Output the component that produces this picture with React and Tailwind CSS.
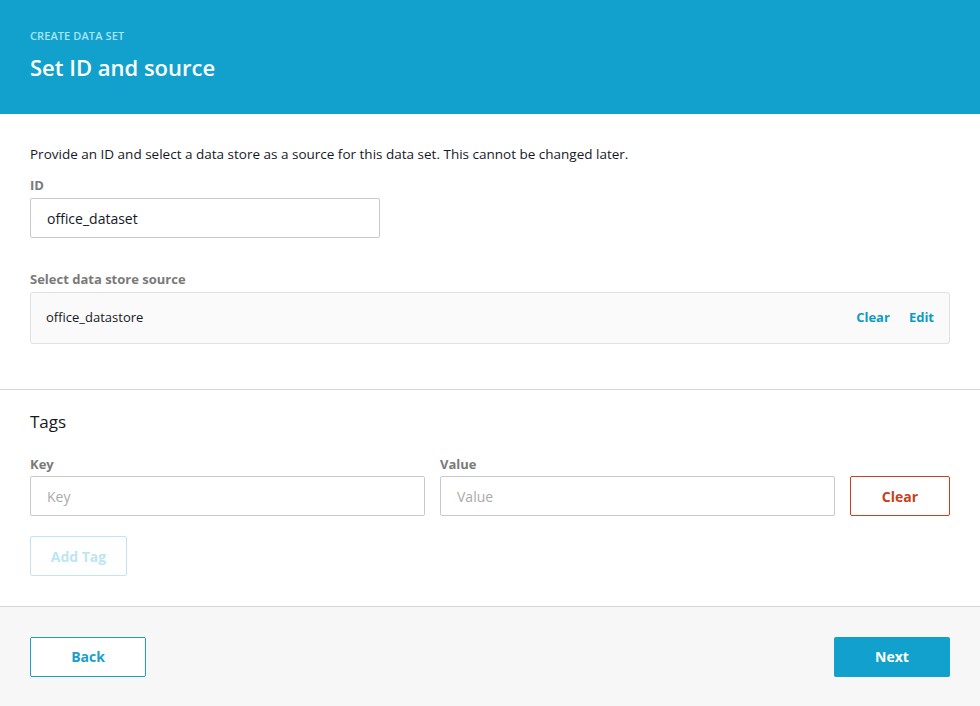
import React from 'react'

const font = { fontFamily: '"Open Sans", "Noto Sans", sans-serif' }

export default function App() {
  return (
    <div className="w-[980px] h-[706px] bg-white flex flex-col text-[#16191f]" style={font}>
      {/* Header */}
      <div className="h-[114px] bg-[#11a1cc] px-[30px] pt-[29px]">
        <div className="text-[11px] font-semibold text-[#a6e6f8] leading-[14px] tracking-[0.1px]">CREATE DATA SET</div>
        <div className="mt-[10px] text-[22px] font-semibold text-white leading-[28px]">Set ID and source</div>
      </div>

      {/* ID and source */}
      <div className="px-[30px] pt-[31px] pb-[45px] border-b border-[#d5d5d5]">
        <p className="text-[13.5px] leading-[18px] text-[#16191f]">
          Provide an ID and select a data store as a source for this data set. This cannot be changed later.
        </p>
        <div className="mt-[14px] text-[13px] font-bold text-[#7a7a7a] leading-[16px]">ID</div>
        <div className="mt-[5px] w-[350px] h-[40px] border border-[#c9c9c9] rounded-[2px] flex items-center px-[16px] text-[14px] text-[#16191f]">
          office_dataset
        </div>
        <div className="mt-[33px] text-[13px] font-bold text-[#7a7a7a] leading-[16px]">Select data store source</div>
        <div className="mt-[5px] h-[52px] bg-[#fafafa] border border-[#e1e1e1] rounded-[3px] flex items-center justify-between pl-[15px] pr-[15px]">
          <span className="text-[13px] text-[#16191f]">office_datastore</span>
          <div className="flex gap-[19px] text-[13px] font-bold text-[#0f9bc7]">
            <span>Clear</span>
            <span>Edit</span>
          </div>
        </div>
      </div>

      {/* Tags */}
      <div className="flex-1 px-[30px] pt-[20px] border-b border-[#d5d5d5]">
        <div className="text-[17px] leading-[24px] text-[#16191f]">Tags</div>
        <div className="mt-[22px] flex gap-[15px] items-end">
          <div className="w-[395px]">
            <div className="text-[13px] font-bold text-[#7a7a7a] leading-[16px]">Key</div>
            <div className="mt-[4px] h-[40px] border border-[#c9c9c9] rounded-[2px] flex items-center px-[16px] text-[14px] text-[#aaaaaa]">Key</div>
          </div>
          <div className="w-[395px]">
            <div className="text-[13px] font-bold text-[#7a7a7a] leading-[16px]">Value</div>
            <div className="mt-[4px] h-[40px] border border-[#c9c9c9] rounded-[2px] flex items-center px-[16px] text-[14px] text-[#aaaaaa]">Value</div>
          </div>
          <button className="w-[100px] h-[40px] border border-[#c8401c] rounded-[2px] text-[14px] font-bold text-[#c8401c] bg-white">Clear</button>
        </div>
        <button className="mt-[20px] w-[97px] h-[40px] border border-[#bfe6f2] rounded-[2px] text-[14px] font-bold text-[#bde5f2] bg-white">Add Tag</button>
      </div>

      {/* Footer */}
      <div className="h-[99px] bg-[#f7f7f7] px-[30px] flex items-center justify-between">
        <button className="w-[116px] h-[40px] border border-[#1a9fc9] rounded-[2px] bg-white text-[14px] font-bold text-[#1a9fc9]">Back</button>
        <button className="w-[116px] h-[40px] rounded-[2px] bg-[#11a1cc] text-[14px] font-bold text-white">Next</button>
      </div>
    </div>
  )
}
